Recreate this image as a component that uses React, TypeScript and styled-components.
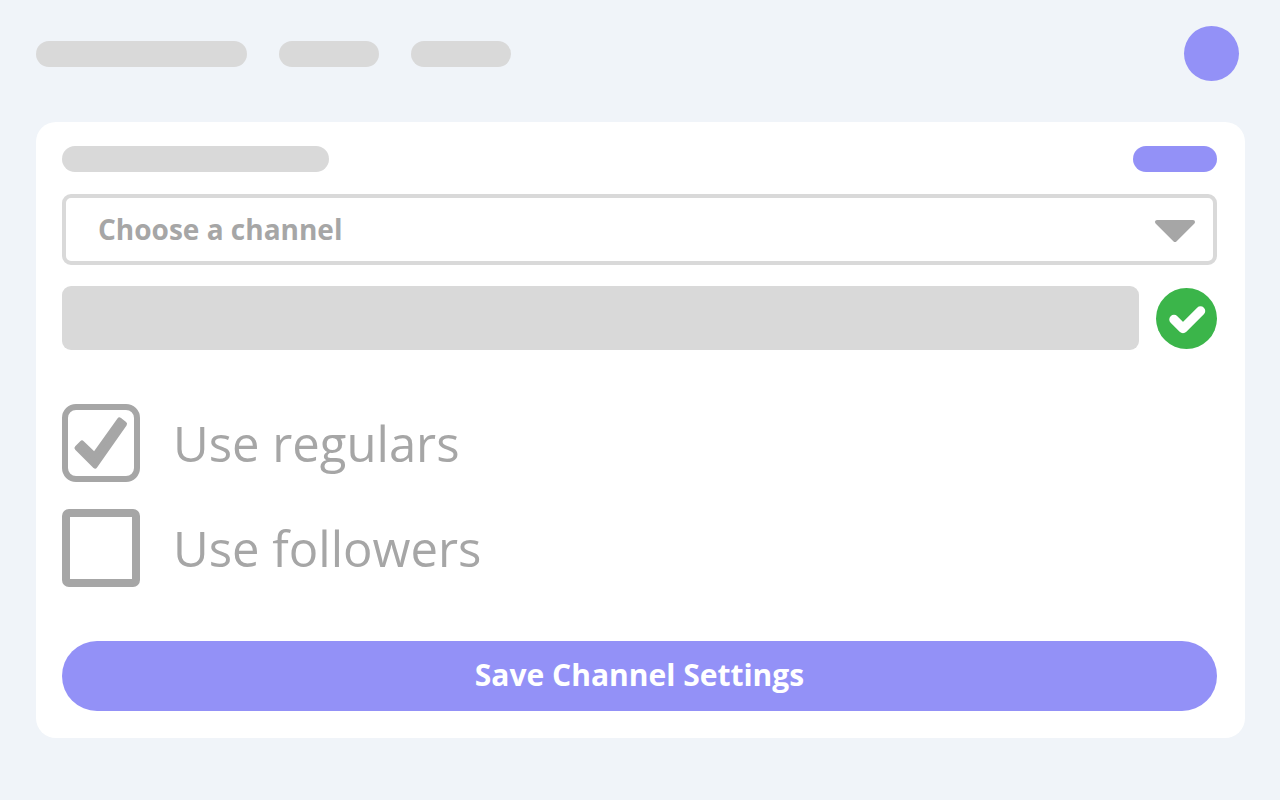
import React, { useState } from "react";
import styled, { createGlobalStyle } from "styled-components";

const color = {
  page: "#f0f4f9",
  card: "#ffffff",
  bone: "#d9d9d9",
  ink: "#a6a6a6",
  accent: "#9391f7",
  success: "#3bb54a",
};

const GlobalStyle = createGlobalStyle`
  *, *::before, *::after { box-sizing: border-box; }
  body {
    margin: 0;
    background: ${color.page};
    color: ${color.ink};
    font-family: "Open Sans", "Noto Sans", sans-serif;
  }
`;

const Page = styled.div`
  min-height: 100vh;
  padding: 26px 35px 62px 36px;
`;

const TopBar = styled.header`
  display: flex;
  align-items: center;
  justify-content: space-between;
  padding-right: 6px;
  margin-bottom: 41px;
`;

const Nav = styled.nav`
  display: flex;
  gap: 32px;
`;

const Pill = styled.div<{ $width: number; $accent?: boolean }>`
  width: ${(p) => p.$width}px;
  height: 26px;
  border-radius: 13px;
  background: ${(p) => (p.$accent ? color.accent : color.bone)};
`;

const Avatar = styled.div`
  width: 55px;
  height: 55px;
  border-radius: 50%;
  background: ${color.accent};
`;

const Card = styled.form`
  display: flex;
  flex-direction: column;
  padding: 24px 28px 27px 26px;
  border-radius: 20px;
  background: ${color.card};
`;

const CardHeader = styled.div`
  display: flex;
  justify-content: space-between;
  margin-bottom: 22px;
`;

const SelectBox = styled.div`
  display: grid;
  align-items: center;
  margin-bottom: 21px;

  > * { grid-area: 1 / 1; }
`;

const Select = styled.select`
  appearance: none;
  width: 100%;
  height: 71px;
  padding: 0 80px 2px 32px;
  border: 4px solid ${color.bone};
  border-radius: 9px;
  background: transparent;
  color: ${color.ink};
  font: 700 28px/40px "Open Sans", "Noto Sans", sans-serif;
`;

const Caret = styled.svg`
  justify-self: end;
  width: 42px;
  height: 26px;
  margin-right: 21px;
  pointer-events: none;
`;

const StatusRow = styled.div`
  display: flex;
  align-items: center;
  gap: 17px;
  margin-bottom: 54px;
`;

const Block = styled.div`
  flex: 1;
  height: 64px;
  border-radius: 9px;
  background: ${color.bone};
`;

const StatusIcon = styled.svg`
  width: 61px;
  height: 61px;
`;

const Options = styled.div`
  display: flex;
  flex-direction: column;
  gap: 27px;
  margin-bottom: 54px;
`;

const Option = styled.label`
  display: flex;
  align-items: center;
  gap: 33px;
  font-size: 49px;
  line-height: 78px;
`;

const Tick = styled.span`
  display: grid;
  width: 78px;
  height: 78px;

  > * { grid-area: 1 / 1; }
`;

const TickInput = styled.input`
  appearance: none;
  width: 78px;
  height: 78px;
  margin: 0;
  border: 8px solid ${color.ink};
  border-radius: 7px;

  &:checked {
    border-width: 6px;
    border-radius: 14px;
  }
`;

const TickMark = styled.svg`
  width: 78px;
  height: 78px;
  pointer-events: none;
`;

const SaveButton = styled.button`
  height: 70px;
  padding: 0 0 2px;
  border: 0;
  border-radius: 35px;
  background: ${color.accent};
  color: #ffffff;
  font: 700 30px/40px "Open Sans", "Noto Sans", sans-serif;
`;

function CheckOption({ label, initial }: { label: string; initial: boolean }) {
  const [checked, setChecked] = useState(initial);
  return (
    <Option>
      <Tick>
        <TickInput
          type="checkbox"
          checked={checked}
          onChange={(e) => setChecked(e.target.checked)}
        />
        {checked && (
          <TickMark viewBox="0 0 78 78" aria-hidden="true">
            <path
              d="M15 44L20 39L32.500 51L57.500 16L62.500 20L33 62Z"
              fill={color.ink}
              stroke={color.ink}
              strokeWidth="5"
              strokeLinejoin="round"
            />
          </TickMark>
        )}
      </Tick>
      {label}
    </Option>
  );
}

export default function App() {
  return (
    <>
      <GlobalStyle />
      <Page>
        <TopBar>
          <Nav>
            <Pill $width={211} />
            <Pill $width={100} />
            <Pill $width={100} />
          </Nav>
          <Avatar />
        </TopBar>
        <Card onSubmit={(e) => e.preventDefault()}>
          <CardHeader>
            <Pill $width={267} />
            <Pill $width={84} $accent />
          </CardHeader>
          <SelectBox>
            <Select aria-label="Channel" defaultValue="">
              <option value="">Choose a channel</option>
            </Select>
            <Caret viewBox="0 0 42 26" aria-hidden="true">
              <path
                d="M3 5H39L21 23Z"
                fill={color.ink}
                stroke={color.ink}
                strokeWidth="4"
                strokeLinejoin="round"
              />
            </Caret>
          </SelectBox>
          <StatusRow>
            <Block />
            <StatusIcon viewBox="0 0 61 61" aria-hidden="true">
              <circle cx="30.500" cy="30.500" r="30.500" fill={color.success} />
              <path
                d="M18 31.500L27 40.500L44.500 23"
                fill="none"
                stroke="#ffffff"
                strokeWidth="9.500"
                strokeLinecap="round"
                strokeLinejoin="round"
              />
            </StatusIcon>
          </StatusRow>
          <Options>
            <CheckOption label="Use regulars" initial={true} />
            <CheckOption label="Use followers" initial={false} />
          </Options>
          <SaveButton type="submit">Save Channel Settings</SaveButton>
        </Card>
      </Page>
    </>
  );
}
